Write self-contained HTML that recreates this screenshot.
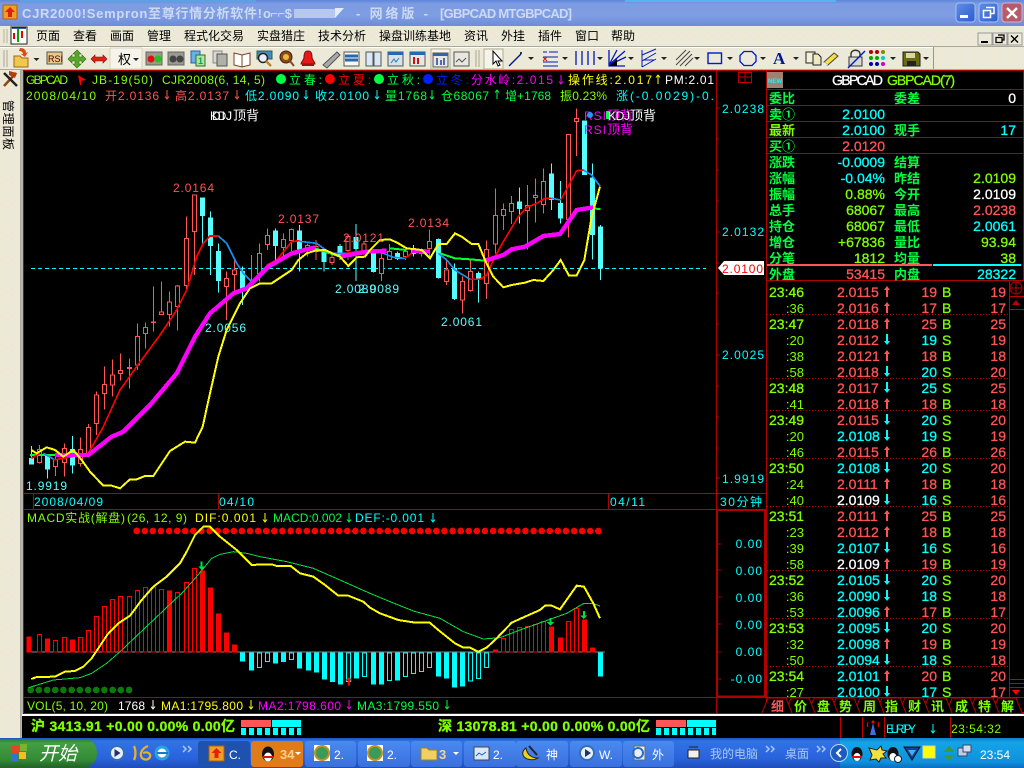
<!DOCTYPE html>
<html><head><meta charset="utf-8"><title>CJR2000</title>
<style>
html,body{margin:0;padding:0;background:#000;width:1024px;height:768px;overflow:hidden}
svg{display:block;position:absolute;left:0;top:0}
text{font-family:"Liberation Sans","WenQuanYi Zen Hei","Noto Sans CJK SC",sans-serif;font-size:12px;white-space:pre;stroke-width:0}
.b{font-size:14px;stroke-width:.3}
.m{font-size:13px;font-weight:bold}
.r{fill:#f55;stroke:#f55}.c{fill:#0ff;stroke:#0ff}.g{fill:#80ff00;stroke:#80ff00}.w{fill:#fff;stroke:#fff}.l{fill:#00ff40;stroke:#00ff40}.y{fill:#ff0;stroke:#ff0}.p{fill:#f0f;stroke:#f0f}
.e{text-anchor:end}
</style></head><body>
<svg width="1024" height="768" viewBox="0 0 1024 768" xmlns="http://www.w3.org/2000/svg">
<defs>
<pattern id="sp" width="9" height="7" patternUnits="userSpaceOnUse"><rect width="9" height="7" fill="#ece9d8"/><rect x="2" y="1" width="1" height="1" fill="#f5dfb5"/><rect x="6" y="4" width="1" height="1" fill="#f7e3c0"/></pattern>
<linearGradient id="tb" x1="0" y1="0" x2="0" y2="1"><stop offset="0" stop-color="#5f86dc"/><stop offset=".15" stop-color="#7d9ce2"/><stop offset=".6" stop-color="#7f9de3"/><stop offset="1" stop-color="#6c8dd9"/></linearGradient>
<linearGradient id="task" x1="0" y1="0" x2="0" y2="1"><stop offset="0" stop-color="#1f4fc0"/><stop offset=".1" stop-color="#3174e6"/><stop offset=".7" stop-color="#2a62db"/><stop offset="1" stop-color="#1d4cb8"/></linearGradient>
<linearGradient id="tray" x1="0" y1="0" x2="0" y2="1"><stop offset="0" stop-color="#0c7fd0"/><stop offset=".15" stop-color="#13a4e8"/><stop offset=".8" stop-color="#0f90dc"/><stop offset="1" stop-color="#0b6cc0"/></linearGradient>
<linearGradient id="btn" x1="0" y1="0" x2="0" y2="1"><stop offset="0" stop-color="#4a8af0"/><stop offset="1" stop-color="#3a70dc"/></linearGradient>
<linearGradient id="st" x1="0" y1="0" x2="0" y2="1"><stop offset="0" stop-color="#2c7f36"/><stop offset=".15" stop-color="#449e42"/><stop offset=".75" stop-color="#338a36"/><stop offset="1" stop-color="#25632b"/></linearGradient>
<linearGradient id="wb" x1="0" y1="0" x2="1" y2="1"><stop offset="0" stop-color="#5f8ee8"/><stop offset="1" stop-color="#2c5ccc"/></linearGradient>
<path id="ad" fill="none" d="M0-5V4M-2 1.5L0 4 2 1.5"/>
<path id="au" fill="none" d="M0 4V-5M-2-2.5L0-5 2-2.5"/>
<path id="bu" d="M-1 5V-2H-3L0-6 3-2H1V5Z"/>
<path id="bd" d="M-1-6V1H-3L0 5 3 1H1V-6Z"/>
<path id="tab" fill="#000" stroke="#c00000" d="M-15 15L-9 0H9L15 15"/>
<circle id="coin" r="7" fill="#3a9a5c" stroke="#c8901e" stroke-width="2"/>
</defs>

<!-- window background -->
<rect width="1024" height="768" fill="#000"/>
<rect y="26" width="1024" height="45" fill="url(#sp)"/>
<rect y="70" width="23" height="668" fill="url(#sp)"/>
<!-- title bar -->
<rect width="1024" height="26" fill="url(#tb)"/>
<rect x="20" y="0" width="236" height="2" fill="#5da0e4"/>
<rect x="625" y="0" width="211" height="2" fill="#54b6ec"/>
<rect x="3" y="5" width="14" height="14" fill="#f0a020" stroke="#b06010"/>
<path d="M10 7L15 12H12V17H8V12H5Z" fill="#e02010"/>
<text class="m" x="22" y="18" textLength="240" lengthAdjust="spacing" style="fill:#ccd9f5">CJR2000!Sempron至尊行情分析软件!</text>
<text class="m" x="263" y="18" textLength="29" lengthAdjust="spacing" style="fill:#ccd9f5">o⌐⌐$</text>
<text class="m" x="356" y="18" textLength="72" lengthAdjust="spacing" style="fill:#ccd9f5">- 网络版 -</text>
<text class="m" x="440" y="18" textLength="132" lengthAdjust="spacing" style="fill:#ccd9f5">[GBPCAD MTGBPCAD]</text>
<rect x="294" y="9" width="41" height="9" fill="#b6c8ee"/>
<path d="M335 8H344L335 18Z" fill="#e4ecfb"/>
<!-- window buttons -->
<rect x="956" y="3" width="19" height="19" rx="3" fill="url(#wb)" stroke="#a8c0ee"/><rect x="960" y="15" width="8" height="3" fill="#fff"/>
<rect x="979" y="3" width="19" height="19" rx="3" fill="url(#wb)" stroke="#a8c0ee"/><path d="M986 7.5h8v6h-3M983.5 10.5h7v7h-7z" fill="none" stroke="#fff" stroke-width="1.5"/>
<rect x="1002" y="3" width="20" height="19" rx="3" fill="#b85a6a" stroke="#d8b0c0"/><path d="M1007 8l10 10M1017 8l-10 10" stroke="#fff" stroke-width="2.4"/>
<!-- menu bar -->
<path d="M4 29v14M7 29v14" stroke="#c8c4b0" stroke-width="1.5"/>
<rect x="11" y="27" width="16" height="17" fill="#fff" stroke="#222"/>
<path d="M14 33v6M22 31v7" stroke="#e00" stroke-width="2"/><path d="M18 29v13" stroke="#0a0" stroke-width="2"/><path d="M12 28h14" stroke="#002288" stroke-width="1.5"/>
<g fill="#000">
<text x="36" y="40">页面</text><text x="73" y="40">查看</text><text x="110" y="40">画面</text><text x="147" y="40">管理</text><text x="184" y="40">程式化交易</text><text x="257" y="40">实盘猎庄</text><text x="318" y="40">技术分析</text><text x="379" y="40">操盘训练基地</text><text x="464" y="40">资讯</text><text x="501" y="40">外挂</text><text x="538" y="40">插件</text><text x="575" y="40">窗口</text><text x="611" y="40">帮助</text>
</g>
<rect x="978" y="33" width="14" height="12" fill="#ece9d8" stroke="#999"/><rect x="981" y="41" width="7" height="2" fill="#000"/>
<rect x="993" y="33" width="14" height="12" fill="#ece9d8" stroke="#999"/><path d="M998 35h6v5h-2M996 37.5h6v5h-6z" fill="none" stroke="#000" stroke-width="1.3"/>
<rect x="1008" y="33" width="14" height="12" fill="#ece9d8" stroke="#999"/><path d="M1011 35.5l7 7M1018 35.5l-7 7" stroke="#000" stroke-width="1.4"/>
<!-- toolbar -->
<rect x="0" y="47" width="933" height="23" fill="#ece9d8"/>
<path d="M0 46.5H1024" stroke="#aca899"/><path d="M0 47.5H933" stroke="#fff"/><path d="M933.5 47V70" stroke="#9a9684"/><path d="M0 69.5H1024" stroke="#aca899"/>
<path d="M4 50v17M7 50v17M476 50v17M479 50v17" stroke="#c0bca8" stroke-width="1.5"/>
<rect x="110" y="48" width="32" height="21" fill="#f6f4ea" stroke="#d6d2c0"/>
<rect x="431" y="49" width="19" height="20" fill="#f6f4ea" stroke="#b0ac98"/>
<!-- folder -->
<path d="M14 56h6l2 2h6v9H14z" fill="#f0c850" stroke="#a06818"/><path d="M20 48c4 0 6 2 6 5l2-1-3 5-4-3 2 0c0-2-2-3-4-3z" fill="#e04818"/>
<path d="M33.500 58h6l-3 3z" fill="#222"/>
<rect x="47" y="52" width="15" height="12" fill="#e8c888" stroke="#555"/><text x="48" y="62" style="font-size:9px" fill="#400">RSI</text>
<path d="M77 50l4 4h-2v3h3v-2l4 4-4 4v-2h-3v3h2l-4 4-4-4h2v-3h-3v2l-4-4 4-4v2h3v-3h-2z" fill="#5aa82a" stroke="#2a6810" stroke-width=".6"/>
<path d="M91 59l4-4v2h8v-2l4 4-4 4v-2h-8v2z" fill="#e02010" stroke="#801008" stroke-width=".6"/>
<text x="118" y="64" fill="#000" style="font-size:13px">权</text><path d="M133 58h6l-3 3z" fill="#222"/>
<rect x="146" y="52" width="16" height="13" fill="#9a9a90" stroke="#666"/><circle cx="151" cy="59" r="3.500" fill="#e01010"/><circle cx="158" cy="59" r="3.500" fill="#28c020"/>
<rect x="168" y="52" width="16" height="13" fill="#9a9a90" stroke="#666"/><circle cx="173" cy="59" r="3.500" fill="#444"/><circle cx="180" cy="59" r="3.500" fill="#444"/>
<rect x="191" y="51" width="9" height="12" fill="#66b0e8" stroke="#2a60a8"/><rect x="196" y="55" width="9" height="11" fill="#b8e0a0" stroke="#2a7028"/><text x="198" y="64" style="font-size:9px;font-weight:bold" fill="#0a5">1</text>
<rect x="213" y="51" width="9" height="12" fill="#d8d8d0" stroke="#888"/><rect x="217" y="54" width="10" height="12" fill="#b0b0a8" stroke="#555"/>
<path d="M234 53l8 2 8-2v12l-8 2-8-2zM242 55v12" fill="#fff" stroke="#804020"/>
<rect x="257" y="51" width="15" height="8" fill="#4a88c0" stroke="#264"/><circle cx="263" cy="58" r="4.500" fill="#e8f0f8" stroke="#222" stroke-width="1.500"/><path d="M266 61l5 5" stroke="#c08030" stroke-width="2.400"/>
<circle cx="286" cy="57" r="6" fill="#8a4a18" stroke="#402008"/><circle cx="286" cy="57" r="3" fill="#e8b840"/><path d="M290 61l4 5" stroke="#8a4a18" stroke-width="2"/>
<path d="M308 51c-3 0-4 3-4 6 0 3-3 5-3 7h14c0-2-3-4-3-7 0-3-1-6-4-6z" fill="#e81818" stroke="#801010"/><rect x="302" y="64" width="12" height="2" fill="#a01010"/>
<path d="M323 65l14-13 3 3-13 13z" fill="#a8a8a8" stroke="#555"/>
<rect x="344" y="52" width="15" height="14" fill="#f8f8f0" stroke="#555"/><path d="M345 56h13M345 60h13" stroke="#2868b0" stroke-width="3"/>
<rect x="366" y="52" width="15" height="14" fill="#d8e8f4" stroke="#555"/><path d="M373.500 52v14" stroke="#555" stroke-width="2"/>
<rect x="388" y="52" width="15" height="14" fill="#d8e0e8" stroke="#555"/><rect x="388" y="52" width="15" height="3" fill="#2868b0"/><path d="M391 63l3-4 2 3 3-4" stroke="#2080c0" fill="none"/>
<rect x="410" y="52" width="15" height="14" fill="#e8e8e0" stroke="#555"/><rect x="410" y="52" width="15" height="3" fill="#2868b0"/><path d="M414 57v7M418 58v6" stroke="#d01010" stroke-width="2"/>
<rect x="433" y="53" width="15" height="14" fill="#e8e8e0" stroke="#555"/><rect x="433" y="53" width="15" height="3" fill="#2868b0"/><path d="M437 58v7M441 60v5M444 58v7" stroke="#2040a0" stroke-width="1.500"/>
<rect x="454" y="52" width="15" height="14" fill="#e8e8e0" stroke="#555"/><path d="M456 62l3-3 3 3 4-4" stroke="#555" fill="none"/>
<rect x="484" y="49" width="19" height="20" fill="#f6f4ea" stroke="#b0ac98"/>
<path d="M493 51v13l3-3 2 5 2-1-2-4h4z" fill="#fff" stroke="#000"/>
<path d="M509 66l12-12" stroke="#001890" stroke-width="1.400"/><circle cx="521" cy="53" r="1" fill="#000"/>
<path d="M528 57h6l-3 3z" fill="#222"/>
<path d="M543 52h4M549 52h9M543 57h15M543 62h15M543 66h15" stroke="#0018c0"/><path d="M543 57l4 4M547 57l-4 4" stroke="#e01010"/>
<path d="M562 57h6l-3 3z" fill="#222"/>
<path d="M576 51v14M582 51v14M588 51v14M594 51v14" stroke="#0018c0" stroke-width="1.300"/><path d="M596 57h6l-3 3z" fill="#222" transform="translate(1 0)"/>
<path d="M609 50v16h16M609 65l16-14M609 65l17-8M609 65l8-15" fill="none" stroke="#0018c0" stroke-width="1.300"/><path d="M609 66l8-7v7z" fill="#000"/><path d="M628 57h6l-3 3z" fill="#222"/>
<path d="M642 50v17M642 67l14-8M642 61l14-8M642 55l14-6M643 60h11" stroke="#0018c0" fill="none"/><path d="M661 57h6l-3 3z" fill="#222"/>
<path d="M676 60l10-10M676 65l14-14M680 66l12-12M685 66l8-8" stroke="#444" fill="none"/><path d="M694 57h6l-3 3z" fill="#222"/>
<rect x="708" y="53" width="13.500" height="10.500" fill="none" stroke="#0018d0" stroke-width="1.400"/><path d="M727 57h6l-3 3z" fill="#222"/>
<path d="M744 51.500h8l4 4v6l-4 4h-8l-4-4v-6z" fill="none" stroke="#0018d0" stroke-width="1.300"/><path d="M760 57h6l-3 3z" fill="#222"/>
<text x="773" y="64" style="font-family:'Liberation Serif',serif;font-size:17px;font-weight:bold" fill="#001888">A</text><path d="M793 57h6l-3 3z" fill="#222"/>
<rect x="806" y="52" width="9" height="11" fill="#f4f0d8" stroke="#222"/><path d="M813 54h5l3 3v8h-8z" fill="#f0e8c0" stroke="#222"/>
<path d="M827 65l-3-3 10-9 4 3-10 9z" fill="#f4e040" stroke="#444"/><path d="M824 62l4 3-5 1z" fill="#eee"/>
<rect x="849" y="57" width="13" height="9" fill="#d8d8d0" stroke="#333"/><path d="M851 57v-3c0-5 9-5 9 0v3" fill="none" stroke="#333" stroke-width="1.400"/><path d="M848 68l17-17" stroke="#0018d0" stroke-width="1.400"/>
<g fill="#a00"><circle cx="871" cy="52" r="2"/><circle cx="877" cy="52" r="2"/></g><g fill="#880"><circle cx="883" cy="52" r="2"/></g><g fill="#0a0"><circle cx="871" cy="58" r="2"/><circle cx="877" cy="58" r="2"/></g><g fill="#0cc"><circle cx="883" cy="58" r="2"/></g><g fill="#00a"><circle cx="871" cy="64" r="2"/><circle cx="877" cy="64" r="2"/></g><g fill="#c0c"><circle cx="883" cy="64" r="2"/></g>
<path d="M890 57h6l-3 3z" fill="#222"/>
<path d="M903 52h15l2 2v12h-17z" fill="#6a6a10" stroke="#222"/><rect x="906" y="53" width="9" height="5" fill="#d8d8a0"/><rect x="907" y="61" width="9" height="5" fill="#222"/>
<path d="M923 57h6l-3 3z" fill="#222"/>
<!-- sidebar -->
<path d="M20.500 70V738" stroke="#aca899"/><path d="M22 70V738" stroke="#808080"/>
<path d="M4 86l12-13" stroke="#8a4a18" stroke-width="2.500"/><path d="M4 73l13 13" stroke="#222" stroke-width="2.500"/><path d="M9 71l8 2-2 5-6-3z" fill="#b04010"/>
<text transform="translate(4 100) rotate(90)" fill="#000" x="0" y="0" textLength="50" lengthAdjust="spacing">管理面板</text>

<!-- frame lines -->
<g fill="none" stroke="#b00000">
<path d="M23.500 70.500H1024M23.500 70V713M23.500 493.500H766M23.500 509.500H766M23.500 697.500H766M23.500 713.500H1024M716.500 70V713M766.500 70V713M767 89.500H1024M767 105.500H1024M767 121.500H1024M767 137.500H1024M767 153.500H1024M767 280.500H1024M1023.500 70V280"/>
<path d="M717 510V697M765 510V697M717 510H765M717 696.500H765" stroke-width="2"/>
<path d="M33.500 493V509M218.500 493V509M608.500 493V509M716.500 509V713"/>
<path d="M716 108h4M716 139h3M716 170h3M716 201h3M716 232h4M716 263h3M716 293h3M716 324h3M716 355h4M716 386h3M716 417h3M716 448h3M716 478h4"/>
<path d="M718 544h3M718 570h3M718 597h3M718 624h3M718 652h3M718 679h3"/>
<path d="M738.500 72.500h13v10h-13zM738.500 77h13M745 72.500v10" stroke="#c00000"/>
</g>
<!-- top info -->
<text class="g" x="26" y="84" textLength="42">GBPCAD</text>
<path d="M78 75l8 5-5 1v4h-1z" fill="#f00"/>
<text class="g" x="92" y="84" textLength="61">JB-19(50)</text>
<text class="g" x="162" y="84" textLength="103">CJR2008(6, 14, 5)</text>
<circle cx="281" cy="79" r="5" fill="#00ff40"/><text class="l" x="289" y="84" textLength="33">立春:</text>
<circle cx="330" cy="79" r="5" fill="#f00"/><text x="338" y="84" textLength="33" fill="#f00">立夏:</text>
<circle cx="379" cy="79" r="5" fill="#00ff40"/><text class="l" x="387" y="84" textLength="33">立秋:</text>
<circle cx="428" cy="79" r="5" fill="#0020ff"/><text x="436" y="84" textLength="33" fill="#0020ff">立冬:</text>
<text class="p" x="471" y="84" textLength="82">分水岭:2.015</text><use href="#ad" x="561" y="80" stroke="#f0f"/>
<text class="y" x="568" y="84" textLength="84">操作线:2.017</text><use href="#au" x="658" y="80" stroke="#ff0"/>
<text class="w" x="665" y="84" textLength="49">PM:2.01</text>

<text class="g" x="26" y="100" textLength="70">2008/04/10</text>
<text class="r" x="105" y="100" textLength="54">开2.0136</text><use href="#ad" x="167" y="95" stroke="#f55"/>
<text class="r" x="175" y="100" textLength="54">高2.0137</text><use href="#ad" x="237" y="95" stroke="#f55"/>
<text class="c" x="245" y="100" textLength="54">低2.0090</text><use href="#ad" x="306" y="95" stroke="#0ff"/>
<text class="c" x="315" y="100" textLength="54">收2.0100</text><use href="#ad" x="377" y="95" stroke="#0ff"/>
<text class="l" x="385" y="100" textLength="42">量1768</text><use href="#ad" x="432" y="95" stroke="#0f4"/>
<text class="l" x="441" y="100" textLength="48">仓68067</text><use href="#au" x="497" y="95" stroke="#0f4"/>
<text class="l" x="505" y="100" textLength="46">增+1768</text>
<text class="g" x="560" y="100" textLength="47">振0.23%</text>
<text class="c" x="616" y="100" textLength="98">涨(-0.0029)-0.</text>

<!-- candles -->
<path d="M31 268.500H706" stroke="#0ff" stroke-dasharray="4 3"/>
<g transform="translate(20 100) scale(.33333)" shape-rendering="crispEdges">
<path fill="#000" stroke="#f55" stroke-width="3" d="M58 1035V1048M58 1088V1090M52 1048h12v40h-12zM106 1060V1080M106 1100V1128M100 1080h12v20h-12zM133 1030V1045M133 1088V1130M127 1045h12v43h-12zM181 1012V1048M181 1090V1100M175 1048h12v42h-12zM205 972V982M205 1060V1065M199 982h12v78h-12zM229 875V885M229 970V1005M223 885h12v85h-12zM253 800V853M253 880V928M247 853h12v27h-12zM277 778V825M277 855V890M271 825h12v30h-12zM301 760V811M301 820V842M295 811h12v9h-12zM328 775V802M328 805V865M322 802h12v3h-12zM352 670V710M352 795V810M346 710h12v85h-12zM376 668V682M376 700V746M370 682h12v18h-12zM400 560V666M400 668V695M394 666h12v2h-12zM424 545V636M418 636h12v8h-12zM448 575V606M448 644V680M442 606h12v38h-12zM472 555V558M472 620V692M466 558h12v62h-12zM499 350V415M499 556V570M493 415h12v141h-12zM523 394V525M517 285h12v109h-12zM619 515V535M619 559V660M613 535h12v24h-12zM643 480V510M643 523V580M637 510h12v13h-12zM694 465V550M718 430V460M718 520V545M712 460h12v60h-12zM742 385V406M742 433V450M736 406h12v27h-12zM790 400V418M790 442V470M784 418h12v24h-12zM814 385V388M814 422V460M808 388h12v34h-12zM862 430V436M862 446V470M856 436h12v10h-12zM888 420V440M888 455V480M882 440h12v15h-12zM936 460V472M936 488V495M930 472h12v16h-12zM984 405V410M984 452V480M978 410h12v42h-12zM1032 425V432M1032 455V470M1026 432h12v23h-12zM1084 460V476M1084 520V543M1078 476h12v44h-12zM1108 432V455M1108 478V480M1102 455h12v23h-12zM1156 450V455M1156 470V480M1150 455h12v15h-12zM1204 445V450M1204 460V470M1198 450h12v10h-12zM1228 388V425M1228 445V470M1222 425h12v20h-12zM1279 475V510M1279 545V555M1273 510h12v35h-12zM1327 530V545M1327 600V640M1321 545h12v55h-12zM1351 480V515M1351 572V575M1345 515h12v57h-12zM1399 422V448M1399 550V597M1393 448h12v102h-12zM1426 265V347M1426 432V460M1420 347h12v85h-12zM1450 310V328M1450 346V390M1444 328h12v18h-12zM1474 288V310M1474 334V372M1468 310h12v24h-12zM1522 255V316M1522 332V448M1516 316h12v16h-12zM1546 235V286M1546 292V368M1540 286h12v6h-12zM1570 205V244M1570 314V340M1564 244h12v70h-12zM1645 358V412M1639 103h12v255h-12zM1669 25V55M1669 65V168M1663 55h12v10h-12z"/>
<path fill="#55ffff" stroke="#55ffff" stroke-width="3" d="M34 1038V1075M28 1075h12v17h-12zM82 1065V1135M76 1070h12v37h-12zM157 1008V1120M151 1048h12v47h-12zM547 294V430M541 294h12v53h-12zM571 335V525M565 354h12v83h-12zM595 430V578M589 454h12v88h-12zM667 500V615M661 515h12v55h-12zM766 385V480M760 393h12v44h-12zM838 375V515M832 393h12v57h-12zM912 450V515M906 456h12v29h-12zM960 432V480M954 440h12v30h-12zM1008 372V543M1002 412h12v33h-12zM1060 450V518M1054 455h12v60h-12zM1132 455V480M1126 460h12v15h-12zM1180 435V470M1174 445h12v15h-12zM1255 415V535M1249 418h12v114h-12zM1303 490V600M1297 505h12v90h-12zM1375 515V608M1369 520h12v15h-12zM1498 262V370M1492 306h12v20h-12zM1594 190V330M1588 222h12v76h-12zM1621 243V370M1615 310h12v44h-12zM1693 62V225M1687 63h12v161h-12zM1717 190V478M1711 234h12v170h-12zM1741 375V540M1735 381h12v123h-12z"/>
<!-- green mid ma -->
<path fill="none" stroke="#00ff30" stroke-width="6" d="M30 1065H105M885 445L960 470M1110 445L1160 450M1260 460L1305 475L1350 478L1395 482M1725 326L1742 327"/>
<!-- blue -->
<path fill="none" stroke="#1890f0" stroke-width="5" d="M70 1060L105 1080M595 408L620 430L650 490L670 520L695 545M838 424L890 430L930 460L980 460M1050 452L1085 458L1120 472L1155 475M1255 460L1280 480L1305 510L1350 538M1595 295L1622 300M1690 210L1715 225L1740 258"/>
<!-- red short -->
<path fill="none" stroke="#f00" stroke-width="5" d="M34 1075L60 1060M100 1080L130 1075L205 1060L250 980L300 870L350 800L420 705L470 630L500 570L530 470L550 430L570 408H595M740 495L770 480L815 425L838 422M980 460L1010 455L1050 452M1155 475L1180 455L1230 450M1350 538L1380 538L1400 525L1425 470L1450 425L1495 350L1520 322L1550 310L1575 295H1595M1622 300L1647 255L1670 212L1690 210"/>
<!-- magenta -->
<path fill="none" stroke="#ff00ff" stroke-width="13" d="M105 1065H205L275 1010L310 995L390 915L470 820L525 710L570 640L640 580L680 565L745 500L815 460L885 442M960 470L1040 455L1100 452M1175 452L1230 455M1395 482L1450 465L1475 448L1515 440L1570 408L1620 402L1670 330L1720 322"/>
<!-- yellow -->
<path fill="none" stroke="#ff0" stroke-width="6" d="M34 1050L50 1060L80 1042L105 1050L130 1070L160 1050L185 1080L210 1115L250 1157H275L300 1165L330 1138H350L375 1128H400L450 1053L495 1025L525 1028L548 980L570 880L595 770L620 690L660 610L690 565L720 550H755L815 510L835 480L860 460L885 452L915 450L960 470L985 498L1010 472L1035 470L1050 450L1080 420L1110 418L1135 430L1160 445L1205 450L1230 475L1255 432H1280L1305 400L1325 410L1355 432H1375L1395 480L1420 530L1450 562L1475 555L1515 548L1540 540L1570 543L1600 510L1622 480L1647 527H1670L1693 480L1715 350L1740 260"/>
</g>
<!-- chart labels -->
<text class="r" x="173" y="192" textLength="41">2.0164</text>
<text class="r" x="278" y="223" textLength="41">2.0137</text>
<text class="r" x="343" y="242" textLength="41">2.0121</text>
<text class="r" x="408" y="227" textLength="41">2.0134</text>
<text x="335" y="293" textLength="41" fill="#55ffff">2.0089</text>
<text x="358" y="293" textLength="41" fill="#55ffff">2.0089</text>
<text x="205" y="332" textLength="41" fill="#55ffff">2.0056</text>
<text x="441" y="326" textLength="41" fill="#55ffff">2.0061</text>
<text x="26" y="490" textLength="41" fill="#55ffff">1.9919</text>
<text class="w" x="210" y="120" textLength="22">KDJ</text><text class="w" x="212" y="120" textLength="20">DIJ</text><text class="w" x="233" y="120" style="font-size:13px">顶背</text>
<text class="p" x="584" y="120" textLength="22">RSI</text><text class="p" x="607" y="120" style="font-size:13px">顶背</text>
<circle cx="590" cy="115" r="3" fill="#18a0f0"/><rect x="606" y="111" width="3" height="8" fill="#00ff40"/>
<text class="w" x="608" y="120" textLength="22">KDJ</text><text class="w" x="630" y="120" style="font-size:13px">顶背</text>
<text class="p" x="584" y="134" textLength="22">RSI</text><text class="p" x="607" y="134" style="font-size:13px">顶背</text>
<!-- axis labels -->
<text x="722" y="113" textLength="42" fill="#0ff">2.0238</text>
<text x="722" y="236" textLength="42" fill="#0ff">2.0132</text>
<text x="722" y="359" textLength="42" fill="#0ff">2.0025</text>
<text x="722" y="483" textLength="42" fill="#0ff">1.9919</text>
<path d="M718 268l6-7h40v14h-40z" fill="#fff"/><text x="722" y="273" textLength="41" fill="#f00">2.0100</text>
<text x="34" y="506" textLength="69" fill="#0ff">2008/04/09</text>
<text x="219" y="506" textLength="35" fill="#0ff">04/10</text>
<text x="610" y="506" textLength="35" fill="#0ff">04/11</text>
<text x="720" y="506" textLength="42" fill="#0ff">30分钟</text>
<!-- MACD -->
<text class="g" x="27" y="522" textLength="98">MACD实战(解盘)</text>
<text class="g" x="127" y="522" textLength="60">(26, 12, 9)</text>
<text class="y" x="195" y="522" textLength="61">DIF:0.001</text><use href="#ad" x="265" y="518" stroke="#ff0"/>
<text class="l" x="273" y="522" textLength="69">MACD:0.002</text><use href="#ad" x="349" y="518" stroke="#0f4"/>
<text class="c" x="355" y="522" textLength="69">DEF:-0.001</text><use href="#ad" x="433" y="518" stroke="#0ff"/>
<g transform="translate(20 505) scale(.33333)" shape-rendering="crispEdges">
<path fill="none" stroke="#f00" stroke-width="20" stroke-linecap="round" stroke-dasharray="0 24.300" d="M350 78H1745"/>
<path fill="none" stroke="#0a7a0a" stroke-width="20" stroke-linecap="round" stroke-dasharray="0 24.600" d="M32 555H332"/>
<path fill="none" stroke="#888" stroke-width="3" d="M20 441.500H1755"/>
<path fill="#f00" stroke="#f00" stroke-width="3" d="M21 396h12V441h-12zM76 402h12V441h-12zM151 405h12V441h-12zM442 258h12V441h-12zM541 198h12V441h-12zM565 249h12V441h-12zM589 327h12V441h-12zM613 384h12V441h-12zM637 420h12V441h-12zM1420 435h12V441h-12zM1588 366h12V441h-12zM1615 399h12V441h-12zM1687 345h12V441h-12zM1711 429h12V441h-12z"/>
<path fill="none" stroke="#f00" stroke-width="3" d="M52 388h12V441h-12zM100 406h12V441h-12zM127 397h12V441h-12zM175 397h12V441h-12zM199 376h12V441h-12zM223 334h12V441h-12zM247 304h12V441h-12zM271 283h12V441h-12zM295 274h12V441h-12zM322 274h12V441h-12zM346 256h12V441h-12zM370 247h12V441h-12zM394 247h12V441h-12zM418 253h12V441h-12zM466 262h12V441h-12zM493 232h12V441h-12zM517 190h12V441h-12zM1444 400h12V441h-12zM1468 373h12V441h-12zM1492 367h12V441h-12zM1516 364h12V441h-12zM1540 358h12V441h-12zM1564 349h12V441h-12zM1639 349h12V441h-12zM1663 310h12V441h-12z"/>
<path fill="#0ff" stroke="#0ff" stroke-width="3" d="M661 444h12V468h-12zM688 444h12V495h-12zM760 444h12V474h-12zM784 444h12V470h-12zM832 444h12V489h-12zM859 444h12V495h-12zM883 444h12V501h-12zM907 444h12V522h-12zM931 444h12V530h-12zM955 444h12V537h-12zM1003 444h12V519h-12zM1054 444h12V537h-12zM1078 444h12V537h-12zM1126 444h12V525h-12zM1249 444h12V513h-12zM1273 444h12V519h-12zM1297 444h12V546h-12zM1321 444h12V543h-12zM1735 444h12V513h-12z"/>
<path fill="none" stroke="#0ff" stroke-width="3" d="M712 444h12V488h-12zM736 444h12V470h-12zM808 444h12V464h-12zM979 444h12V530h-12zM1027 444h12V515h-12zM1102 444h12V527h-12zM1150 444h12V515h-12zM1174 444h12V506h-12zM1198 444h12V500h-12zM1222 444h12V488h-12zM1345 444h12V528h-12zM1369 444h12V521h-12zM1393 444h12V488h-12z"/>
<path fill="none" stroke="#00e040" stroke-width="3" d="M26 548L100 525L180 518L215 505L260 475L300 440L490 260L530 215L575 160L600 148L640 140L680 145L720 155L800 170L880 190L960 225L1050 265L1110 290L1180 318L1260 340L1330 380L1390 402L1440 398L1500 375L1570 350L1640 325L1690 296H1720L1740 303"/>
<path fill="none" stroke="#ff0" stroke-width="6" d="M34 522L50 516L105 515L135 500L165 498L190 485L215 460L235 430L265 385L295 355L330 332L365 285L400 245L440 215L480 175L500 140L525 90L550 65H570L600 95L650 135L695 180L730 178H755L770 183H812L840 205L880 215L915 240L955 272H985L1030 290L1050 308L1080 325L1135 345L1180 352H1228L1255 375L1305 415L1330 428H1350L1375 440L1400 428L1430 400L1475 353L1515 335L1560 315L1575 302H1595L1620 313L1670 242L1692 245L1720 295L1740 340"/>
<path fill="#00e040" d="M542 170h6v14h7l-10 12-10-12h7zM1589 339h6v12h8l-11 11-11-11h8zM1689 318h6v13h8l-11 11-11-11h8z"/>
<path fill="#f00" d="M984 541v-14h-8l11-11 11 11h-8v14z"/>
</g>
<!-- macd axis labels -->
<g fill="#0ff">
<text class="e" x="763" y="548" style="letter-spacing:1px">0.00</text><text class="e" x="763" y="575" style="letter-spacing:1px">0.00</text><text class="e" x="763" y="602" style="letter-spacing:1px">0.00</text><text class="e" x="763" y="629" style="letter-spacing:1px">0.00</text><text class="e" x="763" y="656" style="letter-spacing:1px">0.00</text><text class="e" x="763" y="683" style="letter-spacing:1px">-0.00</text>
</g>
<!-- VOL -->
<text class="g" x="27" y="710" textLength="81">VOL(5, 10, 20)</text>
<text class="w" x="118" y="710" textLength="27">1768</text><use href="#ad" x="153" y="705" stroke="#fff"/>
<text class="y" x="161" y="710" textLength="82">MA1:1795.800</text><use href="#ad" x="251" y="705" stroke="#ff0"/>
<text class="p" x="258" y="710" textLength="83">MA2:1798.600</text><use href="#ad" x="349" y="705" stroke="#f0f"/>
<text class="l" x="357" y="710" textLength="82">MA3:1799.550</text><use href="#ad" x="447" y="705" stroke="#0f4"/>

<!-- right panel header -->
<rect x="767" y="72" width="16" height="16" fill="#a08070"/><text x="768" y="83" style="font-size:6px;font-weight:bold" fill="#0ff">NEW</text>
<text class="b w" x="832" y="85" textLength="51">GBPCAD</text><text class="b g" x="887" y="85" textLength="68">GBPCAD(7)</text>
<!-- quote labels -->
<text class="m l" x="769" y="103">委比</text><text class="m l" x="894" y="103">委差</text>
<text class="m l" x="769" y="119">卖①</text>
<text class="m g" x="769" y="135">最新</text><text class="m l" x="894" y="135">现手</text>
<text class="m l" x="769" y="151">买①</text>
<text class="m l" x="769" y="167">涨跌</text><text class="m l" x="894" y="167">结算</text>
<text class="m l" x="769" y="183">涨幅</text><text class="m l" x="894" y="183">昨结</text>
<text class="m l" x="769" y="199">振幅</text><text class="m l" x="894" y="199">今开</text>
<text class="m l" x="769" y="215">总手</text><text class="m l" x="894" y="215">最高</text>
<text class="m l" x="769" y="231">持仓</text><text class="m l" x="894" y="231">最低</text>
<text class="m l" x="769" y="247">增仓</text><text class="m l" x="894" y="247">量比</text>
<text class="m l" x="769" y="263">分笔</text><text class="m l" x="894" y="263">均量</text>
<text class="m l" x="769" y="279">外盘</text><text class="m l" x="894" y="279">内盘</text>
<g>
<text class="b w e" x="1016" y="103">0</text>
<text class="b c e" x="885" y="119">2.0100</text>
<text class="b c e" x="885" y="135">2.0100</text><text class="b c e" x="1016" y="135">17</text>
<text class="b r e" x="885" y="151">2.0120</text>
<text class="b c e" x="885" y="167">-0.0009</text>
<text class="b c e" x="885" y="183">-0.04%</text><text class="b g e" x="1016" y="183">2.0109</text>
<text class="b g e" x="885" y="199">0.88%</text><text class="b w e" x="1016" y="199">2.0109</text>
<text class="b g e" x="885" y="215">68067</text><text class="b r e" x="1016" y="215">2.0238</text>
<text class="b g e" x="885" y="231">68067</text><text class="b c e" x="1016" y="231">2.0061</text>
<text class="b g e" x="885" y="247">+67836</text><text class="b g e" x="1016" y="247">93.94</text>
<text class="b g e" x="885" y="263">1812</text><text class="b g e" x="1016" y="263">38</text>
<text class="b r e" x="885" y="279">53415</text><text class="b c e" x="1016" y="279">28322</text>
</g>
<rect x="767" y="264" width="165" height="2" fill="#f55"/><rect x="933" y="264" width="88" height="2" fill="#0ff"/>
<!-- trades -->
<g fill="none" stroke="#c00000" stroke-dasharray="1 2"><path d="M767 314.500H1009M767 378.500H1009M767 410.500H1009M767 458.500H1009M767 506.500H1009M767 570.500H1009M767 618.500H1009M767 666.500H1009"/></g>
<g>
<text class="b g" x="769" y="297">23:46</text><text class="g e" x="804" y="313" style="font-size:13px">:36</text>
<text class="b g" x="769" y="329">23:47</text><text class="g e" x="804" y="345" style="font-size:13px">:20</text><text class="g e" x="804" y="361" style="font-size:13px">:38</text><text class="g e" x="804" y="377" style="font-size:13px">:58</text>
<text class="b g" x="769" y="393">23:48</text><text class="g e" x="804" y="409" style="font-size:13px">:41</text>
<text class="b g" x="769" y="425">23:49</text><text class="g e" x="804" y="441" style="font-size:13px">:20</text><text class="g e" x="804" y="457" style="font-size:13px">:46</text>
<text class="b g" x="769" y="473">23:50</text><text class="g e" x="804" y="489" style="font-size:13px">:24</text><text class="g e" x="804" y="505" style="font-size:13px">:40</text>
<text class="b g" x="769" y="521">23:51</text><text class="g e" x="804" y="537" style="font-size:13px">:23</text><text class="g e" x="804" y="553" style="font-size:13px">:39</text><text class="g e" x="804" y="569" style="font-size:13px">:58</text>
<text class="b g" x="769" y="585">23:52</text><text class="g e" x="804" y="601" style="font-size:13px">:36</text><text class="g e" x="804" y="617" style="font-size:13px">:53</text>
<text class="b g" x="769" y="633">23:53</text><text class="g e" x="804" y="649" style="font-size:13px">:32</text><text class="g e" x="804" y="665" style="font-size:13px">:50</text>
<text class="b g" x="769" y="681">23:54</text><text class="g e" x="804" y="697" style="font-size:13px">:27</text>
</g>
<!-- prices -->
<text class="b r" x="837" y="297">2.0115</text><use href="#bu" x="887" y="292" fill="#f55"/>
<text class="b r" x="837" y="313">2.0116</text><use href="#bu" x="887" y="308" fill="#f55"/>
<text class="b r" x="837" y="329">2.0118</text><use href="#bu" x="887" y="324" fill="#f55"/>
<text class="b r" x="837" y="345">2.0112</text><use href="#bd" x="887" y="340" fill="#0ff"/>
<text class="b r" x="837" y="361">2.0121</text><use href="#bu" x="887" y="356" fill="#f55"/>
<text class="b r" x="837" y="377">2.0118</text><use href="#bd" x="887" y="372" fill="#0ff"/>
<text class="b r" x="837" y="393">2.0117</text><use href="#bd" x="887" y="388" fill="#0ff"/>
<text class="b r" x="837" y="409">2.0118</text><use href="#bu" x="887" y="404" fill="#f55"/>
<text class="b r" x="837" y="425">2.0115</text><use href="#bd" x="887" y="420" fill="#0ff"/>
<text class="b c" x="837" y="441">2.0108</text><use href="#bd" x="887" y="436" fill="#0ff"/>
<text class="b r" x="837" y="457">2.0115</text><use href="#bu" x="887" y="452" fill="#f55"/>
<text class="b c" x="837" y="473">2.0108</text><use href="#bd" x="887" y="468" fill="#0ff"/>
<text class="b r" x="837" y="489">2.0111</text><use href="#bu" x="887" y="484" fill="#f55"/>
<text class="b w" x="837" y="505">2.0109</text><use href="#bd" x="887" y="500" fill="#0ff"/>
<text class="b r" x="837" y="521">2.0111</text><use href="#bu" x="887" y="516" fill="#f55"/>
<text class="b r" x="837" y="537">2.0112</text><use href="#bu" x="887" y="532" fill="#f55"/>
<text class="b c" x="837" y="553">2.0107</text><use href="#bd" x="887" y="548" fill="#0ff"/>
<text class="b w" x="837" y="569">2.0109</text><use href="#bu" x="887" y="564" fill="#f55"/>
<text class="b c" x="837" y="585">2.0105</text><use href="#bd" x="887" y="580" fill="#0ff"/>
<text class="b c" x="837" y="601">2.0090</text><use href="#bd" x="887" y="596" fill="#0ff"/>
<text class="b c" x="837" y="617">2.0096</text><use href="#bu" x="887" y="612" fill="#f55"/>
<text class="b c" x="837" y="633">2.0095</text><use href="#bd" x="887" y="628" fill="#0ff"/>
<text class="b c" x="837" y="649">2.0098</text><use href="#bu" x="887" y="644" fill="#f55"/>
<text class="b c" x="837" y="665">2.0094</text><use href="#bd" x="887" y="660" fill="#0ff"/>
<text class="b c" x="837" y="681">2.0101</text><use href="#bu" x="887" y="676" fill="#f55"/>
<text class="b c" x="837" y="697">2.0100</text><use href="#bd" x="887" y="692" fill="#0ff"/>
<!-- vols -->
<text class="b r e" x="937" y="297">19</text><text class="b g" x="942" y="297">B</text><text class="b r e" x="1006" y="297">19</text>
<text class="b r e" x="937" y="313">17</text><text class="b g" x="942" y="313">B</text><text class="b r e" x="1006" y="313">17</text>
<text class="b r e" x="937" y="329">25</text><text class="b g" x="942" y="329">B</text><text class="b r e" x="1006" y="329">25</text>
<text class="b c e" x="937" y="345">19</text><text class="b g" x="942" y="345">S</text><text class="b r e" x="1006" y="345">19</text>
<text class="b r e" x="937" y="361">18</text><text class="b g" x="942" y="361">B</text><text class="b r e" x="1006" y="361">18</text>
<text class="b c e" x="937" y="377">20</text><text class="b g" x="942" y="377">S</text><text class="b r e" x="1006" y="377">20</text>
<text class="b c e" x="937" y="393">25</text><text class="b g" x="942" y="393">S</text><text class="b r e" x="1006" y="393">25</text>
<text class="b r e" x="937" y="409">18</text><text class="b g" x="942" y="409">B</text><text class="b r e" x="1006" y="409">18</text>
<text class="b c e" x="937" y="425">20</text><text class="b g" x="942" y="425">S</text><text class="b r e" x="1006" y="425">20</text>
<text class="b c e" x="937" y="441">19</text><text class="b g" x="942" y="441">S</text><text class="b r e" x="1006" y="441">19</text>
<text class="b r e" x="937" y="457">26</text><text class="b g" x="942" y="457">B</text><text class="b r e" x="1006" y="457">26</text>
<text class="b c e" x="937" y="473">20</text><text class="b g" x="942" y="473">S</text><text class="b r e" x="1006" y="473">20</text>
<text class="b r e" x="937" y="489">18</text><text class="b g" x="942" y="489">B</text><text class="b r e" x="1006" y="489">18</text>
<text class="b c e" x="937" y="505">16</text><text class="b g" x="942" y="505">S</text><text class="b r e" x="1006" y="505">16</text>
<text class="b r e" x="937" y="521">25</text><text class="b g" x="942" y="521">B</text><text class="b r e" x="1006" y="521">25</text>
<text class="b r e" x="937" y="537">18</text><text class="b g" x="942" y="537">B</text><text class="b r e" x="1006" y="537">18</text>
<text class="b c e" x="937" y="553">16</text><text class="b g" x="942" y="553">S</text><text class="b r e" x="1006" y="553">16</text>
<text class="b r e" x="937" y="569">19</text><text class="b g" x="942" y="569">B</text><text class="b r e" x="1006" y="569">19</text>
<text class="b c e" x="937" y="585">20</text><text class="b g" x="942" y="585">S</text><text class="b r e" x="1006" y="585">20</text>
<text class="b c e" x="937" y="601">18</text><text class="b g" x="942" y="601">S</text><text class="b r e" x="1006" y="601">18</text>
<text class="b r e" x="937" y="617">17</text><text class="b g" x="942" y="617">B</text><text class="b r e" x="1006" y="617">17</text>
<text class="b c e" x="937" y="633">20</text><text class="b g" x="942" y="633">S</text><text class="b r e" x="1006" y="633">20</text>
<text class="b r e" x="937" y="649">19</text><text class="b g" x="942" y="649">B</text><text class="b r e" x="1006" y="649">19</text>
<text class="b c e" x="937" y="665">18</text><text class="b g" x="942" y="665">S</text><text class="b r e" x="1006" y="665">18</text>
<text class="b r e" x="937" y="681">20</text><text class="b g" x="942" y="681">B</text><text class="b r e" x="1006" y="681">20</text>
<text class="b c e" x="937" y="697">17</text><text class="b g" x="942" y="697">S</text><text class="b r e" x="1006" y="697">17</text>
<!-- scrollbar -->
<g fill="none" stroke="#c00000">
<path d="M1009.500 280V698M1009.500 296.500H1024M1009.500 309.500H1024M1009.500 679.500H1024M1009.500 683.500H1024M1009.500 687.500H1024M1009.500 697.500H1024"/>
<circle cx="1016" cy="288" r="6"/><path d="M1010 288h12M1016 282v12"/>
</g>
<path d="M1016 300l4 5h-8z" fill="#c00000"/><path d="M1016 695l4-5h-8z" fill="#f00"/>
<!-- tabs -->
<path d="M767 697.500H1024" stroke="#c00000"/><path d="M767 712.500H1024" stroke="#c00000"/>
<g>
<use href="#tab" x="1007" y="698"/><use href="#tab" x="984" y="698"/><use href="#tab" x="961" y="698"/><use href="#tab" x="937" y="698"/><use href="#tab" x="914" y="698"/><use href="#tab" x="891" y="698"/><use href="#tab" x="869" y="698"/><use href="#tab" x="845" y="698"/><use href="#tab" x="823" y="698"/><use href="#tab" x="800" y="698"/><use href="#tab" x="777" y="698"/>
</g>
<text class="m r" x="771" y="711">细</text>
<text class="m g" x="794" y="711">价</text><text class="m g" x="817" y="711">盘</text><text class="m g" x="839" y="711">势</text><text class="m g" x="863" y="711">周</text><text class="m g" x="885" y="711">指</text><text class="m g" x="908" y="711">财</text><text class="m g" x="931" y="711">讯</text><text class="m g" x="955" y="711">成</text><text class="m g" x="978" y="711">特</text><text class="m g" x="1001" y="711">解</text>
<rect x="22" y="714" width="1002" height="2" fill="#fff"/>
<!-- status -->
<rect x="22" y="716" width="1002" height="22" fill="#000"/>
<text class="b g" x="31" y="731" textLength="204" style="font-weight:bold">沪 3413.91 +0.00 0.00% 0.00亿</text>
<rect x="241" y="720" width="30" height="7" fill="#f55"/><rect x="272" y="720" width="29" height="7" fill="#0ff"/>
<path d="M241 731.500H301" stroke="#0ff" stroke-width="7" stroke-dasharray="5 3"/>
<text class="b g" x="438" y="731" textLength="212" style="font-weight:bold">深 13078.81 +0.00 0.00% 0.00亿</text>
<rect x="656" y="720" width="30" height="7" fill="#f55"/><rect x="687" y="720" width="29" height="7" fill="#0ff"/>
<path d="M656 731.500H716" stroke="#0ff" stroke-width="7" stroke-dasharray="5 3"/>
<path d="M840.500 717V738M862.500 717V738M884.500 717V738M950.500 717V738" stroke="#c00000"/>
<path d="M870 735l3-12 3 12z" fill="#4070e0"/><path d="M868 722a5 5 0 0 0 0 5M878 722a5 5 0 0 1 0 5" stroke="#f00" fill="none"/><circle cx="873" cy="722" r="1.500" fill="#f00"/>
<text class="c" x="886" y="733" textLength="30">EURJPY</text><use href="#ad" x="933" y="729" stroke="#0ff"/>
<text class="g" x="951" y="733" textLength="50">23:54:32</text>

<!-- taskbar -->
<rect y="738" width="1024" height="30" fill="url(#task)"/>
<path d="M0 739H88c6 2 9 8 9 14s-3 12-9 14H0z" fill="url(#st)"/>
<rect x="12" y="746" width="7" height="7" fill="#e04820"/><rect x="20" y="744" width="7" height="7" fill="#70b830"/><rect x="11" y="754" width="7" height="7" fill="#3870d8"/><rect x="19" y="752" width="7" height="7" fill="#f0c020"/>
<text x="39" y="760" style="font-size:19px;font-style:italic" fill="#fff">开始</text>
<circle cx="117" cy="753" r="7" fill="#e8f0f8" stroke="#3070b8" stroke-width="2"/><path d="M114.500 749l6 4-6 4z" fill="#203070"/>
<path d="M134 746c2 4 2 10 0 14M148 746c-5 2-8 6-7 10 1 4 7 5 9 1 1-3-2-6-7-4" fill="none" stroke="#f0b020" stroke-width="2.200"/>
<circle cx="162" cy="753" r="6" fill="#fff" stroke="#28a0e8" stroke-width="3"/><path d="M157 753h11" stroke="#1878d0" stroke-width="2"/>
<path d="M183 746l3 3-3 3M188 746l3 3-3 3" stroke="#a8c8f0" fill="none" stroke-width="1.500"/>
<rect x="198" y="741" width="52" height="26" rx="3" fill="#1e52ae"/>
<rect x="209" y="746" width="15" height="15" fill="#f0a020" stroke="#b06010"/><path d="M216.500 748l5 5h-3v5h-4v-5h-3z" fill="#e02010"/><text class="w" x="229" y="759">C.</text>
<rect x="251" y="741" width="52" height="26" rx="3" fill="#e07c18"/>
<ellipse cx="268" cy="754" rx="6" ry="7.500" fill="#111"/><ellipse cx="268" cy="757" rx="4" ry="4.500" fill="#fff"/><rect x="263" y="756" width="10" height="2" fill="#e01010"/>
<text x="280" y="759" style="font-weight:bold;font-size:13px" fill="#fad090">34</text><path d="M295 752h6l-3 3z" fill="#fff"/>
<rect x="305" y="741" width="51" height="26" rx="3" fill="url(#btn)"/><rect x="314" y="745" width="16" height="16" fill="#fff"/><use href="#coin" x="322" y="753"/><text class="w" x="334" y="759">2.</text>
<rect x="358" y="741" width="52" height="26" rx="3" fill="url(#btn)"/><rect x="367" y="745" width="16" height="16" fill="#fff"/><use href="#coin" x="375" y="753"/><text class="w" x="387" y="759">2.</text>
<rect x="411" y="741" width="51" height="26" rx="3" fill="url(#btn)"/><path d="M421 748h6l2 2h8v10h-16z" fill="#f0d060" stroke="#a08020"/><text x="439" y="759" style="font-weight:bold;font-size:13px" fill="#fad090">3</text><path d="M453 752h6l-3 3z" fill="#fff"/>
<rect x="464" y="741" width="52" height="26" rx="3" fill="url(#btn)"/><rect x="474" y="747" width="15" height="13" fill="#d8e8f8" stroke="#445"/><path d="M476 756l3-3 3 2 4-3" stroke="#2060c0" fill="none"/><text class="w" x="493" y="759">2.</text>
<rect x="516" y="741" width="52" height="26" rx="3" fill="url(#btn)"/><path d="M526 748c1 7 6 10 12 10-5 3-13 2-15-3-1-3 1-6 3-7z" fill="#f0d020" stroke="#222"/><path d="M529 746l8 9" stroke="#222" stroke-width="2"/><text class="w" x="546" y="759">神</text>
<rect x="570" y="741" width="52" height="26" rx="3" fill="url(#btn)"/><circle cx="587" cy="753" r="7" fill="#e8f0f8" stroke="#3070b8" stroke-width="2"/><path d="M585 749l6 4-6 4z" fill="#203070"/><text class="w" x="599" y="759">W.</text>
<rect x="623" y="741" width="51" height="26" rx="3" fill="url(#btn)"/><rect x="634" y="746" width="11" height="14" fill="#eee" stroke="#666"/><circle cx="638" cy="753" r="5" fill="none" stroke="#2070d0" stroke-width="2"/><text class="w" x="652" y="759">外</text>
<rect x="688" y="750" width="11" height="8" fill="#f0f0f0" stroke="#222"/><path d="M689 747h9" stroke="#222"/>
<g fill="#a8c8f0"><text x="710" y="758">我的电脑</text><text x="785" y="758">桌面</text></g>
<path d="M766 746l3 3-3 3M771 746l3 3-3 3M817 746l3 3-3 3M822 746l3 3-3 3" stroke="#a8c8f0" fill="none" stroke-width="1.500"/>
<rect x="840" y="738" width="184" height="30" fill="url(#tray)"/>
<circle cx="839" cy="753" r="8.500" fill="#1c5cc0" stroke="#b8d8f8"/><path d="M841 749l-4 4 4 4" stroke="#fff" stroke-width="2" fill="none"/>
<ellipse cx="857" cy="754" rx="5.500" ry="7" fill="#111"/><ellipse cx="857" cy="757" rx="3.500" ry="4" fill="#fff"/><rect x="852" y="756" width="10" height="2" fill="#e01010"/>
<path d="M869 748l8 2 4-4 1 4 5 1-4 3 3 4-5 0-2 4-3-3-6 1 2-5z" fill="#f0e040" stroke="#222"/>
<ellipse cx="893" cy="754" rx="5.500" ry="7" fill="#111"/><ellipse cx="893" cy="757" rx="3.500" ry="4" fill="#fff"/><circle cx="898" cy="759" r="3.500" fill="#fff" stroke="#222"/>
<path d="M904 747h16l-8 13z" fill="#1040a0" stroke="#111"/><path d="M908 750h8l-4 6z" fill="#40b0e8"/>
<rect x="923" y="746" width="12" height="12" fill="#ff0" stroke="#d8d8a0"/>
<path d="M943 752l6-6 6 6zM943 755l6 6 6-6z" fill="#3c9a3c"/>
<rect x="958" y="748" width="9" height="8" fill="#b8d0e8" stroke="#446"/><rect x="963" y="745" width="8" height="7" fill="#d0e0f0" stroke="#446"/>
<text class="w" x="980" y="759" textLength="30">23:54</text>
</svg>
</body></html>
